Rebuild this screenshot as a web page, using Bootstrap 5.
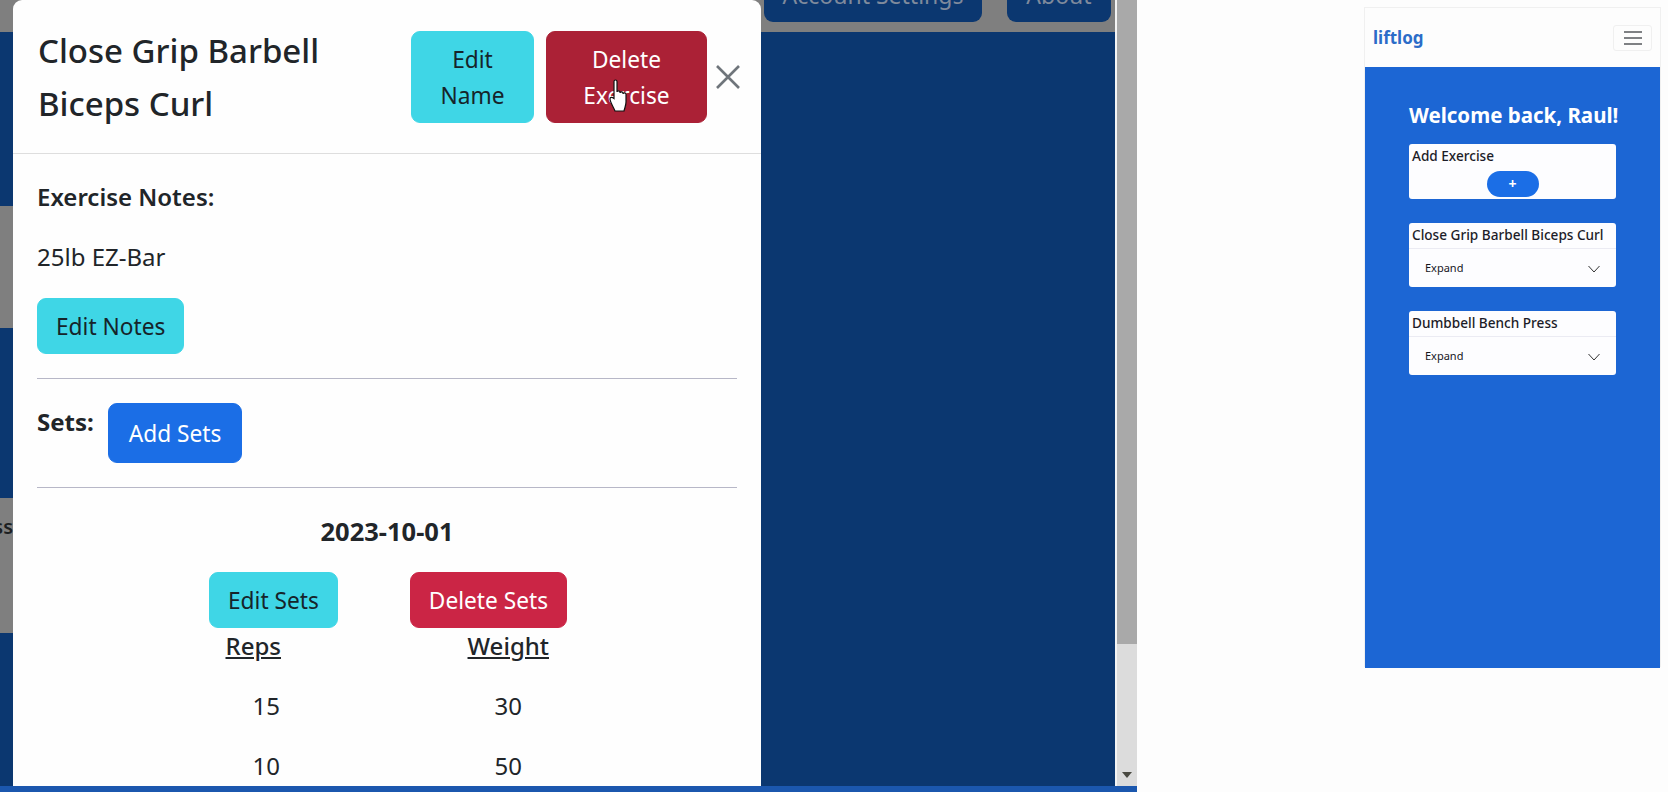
<!DOCTYPE html>
<html lang="en">
<head>
  <meta charset="UTF-8">
  <meta name="viewport" content="width=device-width, initial-scale=1.0">
  <link href="https://cdn.jsdelivr.net/npm/bootstrap@5.3.0/dist/css/bootstrap.min.css" rel="stylesheet">
  <script src="https://cdn.jsdelivr.net/npm/bootstrap@5.3.0/dist/js/bootstrap.bundle.min.js"></script>
  <title>liftlog</title>
  <style>
    html, body { height: 100%; overflow: hidden; }
    body { font-family: "Noto Sans", "Open Sans", sans-serif; background: #fdfdfd; color: #212529; }
    .shot { height: 792px; }

    /* left window: the app at 150% zoom with a modal open */
    .browser-pane { width: 1137px; flex: none; }
    .page-under { background: #0b3770; }
    .top-strip { height: 32px; background: #7f7f7f; gap: 25px; padding-right: 4px; }
    .top-link { height: 22px; background: #0b3770; color: #7f8a9c; font-size: 23px; line-height: 22px; border-radius: 0 0 9px 9px; text-align: center; overflow: hidden; }
    .top-link span { display: block; margin-top: -16px; }
    .link-account { width: 218px; }
    .link-about { width: 104px; }
    .dim-card { background: #7f7f7f; width: 13px; overflow: hidden; }
    .dim-one { height: 122px; margin-top: 174px; }
    .dim-two { height: 135px; margin-top: 170px; font-weight: 600; font-size: 20px; line-height: 58px; color: #1c1f22; white-space: nowrap; }
    .fake-scroll { width: 22px; flex: none; background: #dcdcdc; border-left: 2px solid #f4f4f4; }
    .scroll-thumb { height: 644px; background: #a9a9a9; }
    .scroll-arrow { width: 0; height: 0; border: 5px solid transparent; border-top: 6px solid #4a4a42; border-bottom: 0; }
    .task-strip { height: 6px; background: #1b57ae; }

    .open-modal { position: absolute; left: 13px; top: 0; bottom: 0; width: 748px; }
    .open-modal .modal-content { height: 100%; border: 0; border-radius: 9px 9px 0 0; overflow: hidden; background: #fefefe; font-size: 24px; }
    .open-modal .modal-header { padding: 24px 24px 24px 25px; height: 154px; align-items: flex-start; border-bottom: 1px solid #dedede; }
    .open-modal .modal-title { font-size: 33px; font-weight: 500; line-height: 53px; margin-top: 0; width: 340px; flex: none; }
    .open-modal .modal-body { padding: 0 24px 0 24px; }
    .lift-btn { font-size: 22.700px; line-height: 36px; padding: 10px 18px 8px; border-radius: 9px; }
    .lift-cyan { background: #3fd6e6; border-color: #3fd6e6; color: #16242a; }
    .lift-red-dark { background: #ab2136; border-color: #ab2136; color: #fff; }
    .lift-red { background: #cb2545; border-color: #cb2545; color: #fff; }
    .lift-blue { background: #1b6ee6; border-color: #1b6ee6; color: #fff; }
    .name-btn { width: 123px; height: 92px; margin-left: 33px; margin-top: 7px; flex: none; }
    .drop-btn { width: 161px; height: 92px; margin-left: 12px; margin-top: 7px; flex: none; }
    .close-x { width: 24px; height: 24px; margin: 41px 0 0 9px; flex: none; }
    .notes-label { font-weight: 600; line-height: 36px; margin-top: 25px; }
    .notes-text { line-height: 36px; margin-top: 24px; }
    .notes-btn { margin-top: 23px; }
    .soft-rule { margin: 24px 0 0; border-color: #b7b7c7; opacity: 1; }
    .sets-row { margin-top: 24px; gap: 14px; }
    .sets-row b { font-weight: 700; line-height: 36px; margin-top: 1px; }
    .add-sets-btn { height: 60px; padding: 12px 20px 10px; }
    .date-line { font-weight: 700; font-size: 25.500px; line-height: 36px; margin-top: 25px; text-align: center; }
    .set-actions { margin-top: 23px; padding-left: 172px; gap: 72px; }
    .set-head { margin-top: 0; font-weight: 500; line-height: 36px; }
    .reps-col { width: 244px; text-align: right; }
    .weight-col { width: 268px; text-align: right; }
    .set-row { margin-top: 24px; line-height: 36px; }
    .reps-num { width: 243px; text-align: right; }
    .weight-num { width: 242px; text-align: right; }
    .hand-cursor { position: absolute; left: 596px; top: 79px; width: 20px; height: 34px; }

    /* right window: phone preview */
    .phone-box { width: 297px; height: 660px; margin: 7px 7px 0 auto; border: 1px solid #f0f0f0; border-bottom: 0; }
    .phone-nav { height: 59px; padding: 0 8px 0 8px; background: #fdfdfd; }
    .phone-brand { font-size: 17px; font-weight: 700; color: #2b6cc8; }
    .phone-toggle { width: 39px; height: 26px; border: 1px solid #f0f0f0; border-radius: 3px; }
    .phone-main { height: 601px; background: #1c66d4; padding-top: 34px; }
    .phone-hello { width: 207px; margin: 0 auto 15px; text-align: center; white-space: nowrap; color: #fff; font-size: 20.500px; font-weight: 700; line-height: 28px; }
    .lift-card { width: 207px; margin: 0 auto 24px; background: #fdfdff; border-radius: 3px; border: 0; }
    .lift-card-title { font-size: 13.600px; font-weight: 500; line-height: 18px; padding: 3px 3px 0; color: #1c1c28; white-space: nowrap; }
    .plus-btn { width: 52px; height: 26px; padding: 0; margin: 6px auto 2px; display: block; background: #1b6ee6; border: 0; border-radius: 13px; color: #fff; font-size: 14px; font-weight: 700; line-height: 26px; }
    .expand-row { margin-top: 4px; border-top: 1px solid #ebebf3; height: 39px; padding: 1px 16px 0; font-size: 11px; color: #16161e; }
  </style>
</head>
<body>
  <div class="shot d-flex">

    <div class="browser-pane d-flex flex-column">
      <div class="d-flex flex-grow-1 overflow-hidden">
        <div class="page-under position-relative flex-grow-1">
          <div class="top-strip d-flex justify-content-end align-items-start">
            <div class="top-link link-account"><span>Account Settings</span></div>
            <div class="top-link link-about"><span>About</span></div>
          </div>
          <div class="dim-card dim-one"></div>
          <div class="dim-card dim-two d-flex justify-content-end"><span>ss</span></div>

          <div class="open-modal">
            <div class="modal-content">
              <div class="modal-header">
                <h3 class="modal-title">Close Grip Barbell Biceps Curl</h3>
                <button class="btn lift-btn lift-cyan name-btn">Edit Name</button>
                <button class="btn lift-btn lift-red-dark drop-btn">Delete Exercise</button>
                <svg class="close-x" viewBox="0 0 24 24"><path d="M1 1 23 23M23 1 1 23" stroke="#6f757b" stroke-width="2.6" fill="none"/></svg>
              </div>
              <div class="modal-body">
                <div class="notes-label">Exercise Notes:</div>
                <div class="notes-text">25lb EZ-Bar</div>
                <button class="btn lift-btn lift-cyan notes-btn">Edit Notes</button>
                <hr class="soft-rule">
                <div class="sets-row d-flex align-items-start">
                  <b>Sets:</b>
                  <button class="btn lift-btn lift-blue add-sets-btn">Add Sets</button>
                </div>
                <hr class="soft-rule">
                <div class="date-line">2023-10-01</div>
                <div class="set-actions d-flex">
                  <button class="btn lift-btn lift-cyan">Edit Sets</button>
                  <button class="btn lift-btn lift-red">Delete Sets</button>
                </div>
                <div class="set-head d-flex">
                  <div class="reps-col"><u>Reps</u></div>
                  <div class="weight-col"><u>Weight</u></div>
                </div>
                <div class="set-row d-flex"><div class="reps-num">15</div><div class="weight-num">30</div></div>
                <div class="set-row d-flex"><div class="reps-num">10</div><div class="weight-num">50</div></div>
              </div>
            </div>
            <svg class="hand-cursor" viewBox="0 0 20 34"><path d="M5 2.500c0-2 3-2 3 0V13c0-1.600 3-1.600 3 0v1c0-1.600 3-1.600 3 0v1c0-1.500 3-1.500 3 0v8c0 3-1 5-2 9H6c-1-3-5-9-5-12 0-2 2-2 4-.5z" fill="#fff" stroke="#111" stroke-width="1.2"/></svg>
          </div>
        </div>
        <div class="fake-scroll d-flex flex-column align-items-center">
          <div class="scroll-thumb w-100"></div>
          <div class="scroll-arrow mt-auto mb-2"></div>
        </div>
      </div>
      <div class="task-strip"></div>
    </div>

    <div class="flex-grow-1">
      <div class="phone-box">
        <div class="phone-nav d-flex align-items-center justify-content-between">
          <span class="phone-brand">liftlog</span>
          <span class="phone-toggle d-flex align-items-center justify-content-center">
            <svg width="18" height="14" viewBox="0 0 18 14"><path d="M0 1h18M0 7h18M0 13h18" stroke="#55585c" stroke-width="1.3"/></svg>
          </span>
        </div>
        <div class="phone-main">
          <div class="phone-hello">Welcome back, Raul!</div>
          <div class="card lift-card">
            <div class="lift-card-title">Add Exercise</div>
            <button class="plus-btn">+</button>
          </div>
          <div class="card lift-card">
            <div class="lift-card-title">Close Grip Barbell Biceps Curl</div>
            <div class="expand-row d-flex align-items-center justify-content-between">
              <span>Expand</span>
              <svg width="12" height="8" viewBox="0 0 12 8"><path d="M.5 1 6 7 11.500 1" stroke="#333" fill="none"/></svg>
            </div>
          </div>
          <div class="card lift-card">
            <div class="lift-card-title">Dumbbell Bench Press</div>
            <div class="expand-row d-flex align-items-center justify-content-between">
              <span>Expand</span>
              <svg width="12" height="8" viewBox="0 0 12 8"><path d="M.5 1 6 7 11.500 1" stroke="#333" fill="none"/></svg>
            </div>
          </div>
        </div>
      </div>
    </div>

  </div>
</body>
</html>
